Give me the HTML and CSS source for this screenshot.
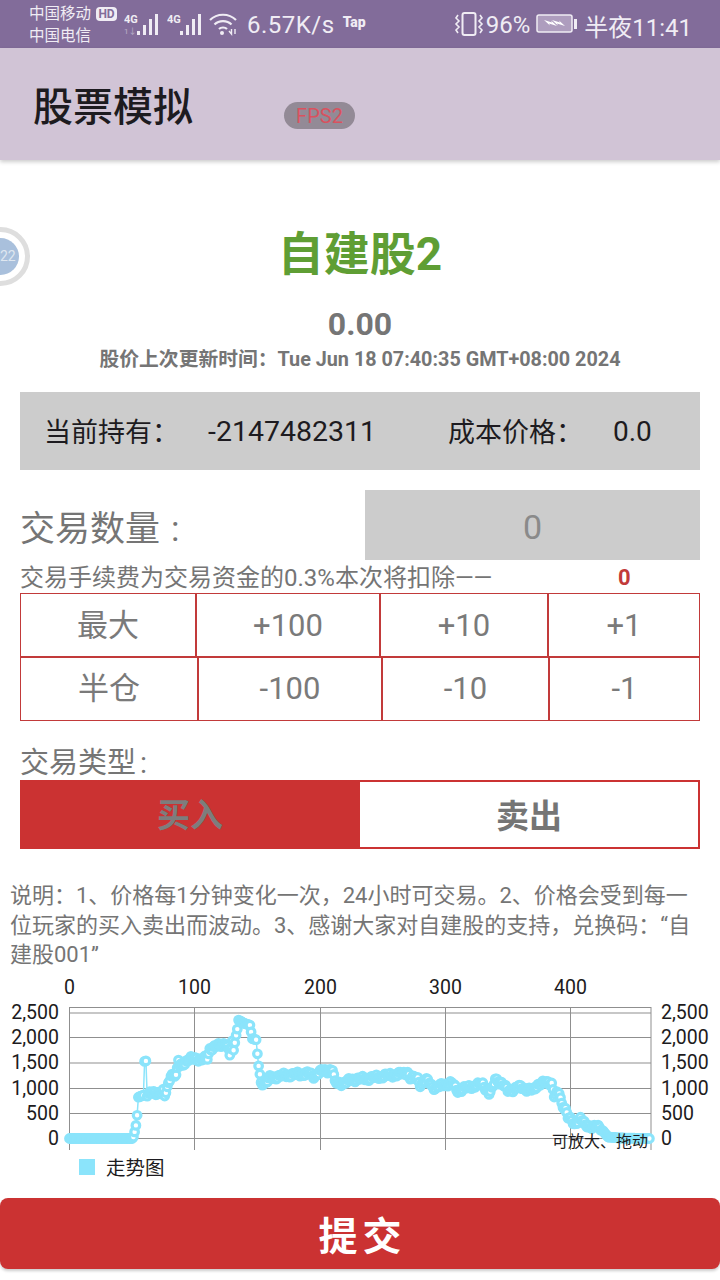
FILE: index.html
```html
<!DOCTYPE html>
<html>
  <head>
    <meta charset="utf-8">
    <title>股票模拟</title>
    <meta name="viewport" content="width=device-width, initial-scale=1">
    <link rel="stylesheet" href="styles.css">
  </head>
  <body>
    <div class="status-bar">
      <div class="carriers">
        <div class="carrier-line">中国移动<span class="hd-badge">HD</span></div>
        <div>中国电信</div>
      </div>
      <svg class="signal" width="37" height="26" viewBox="0 0 37 26">
        <text x="0" y="12" class="signal-text">4G</text>
        <text x="0" y="23" class="signal-sub">1↓</text>
        <rect x="13" y="20" width="3" height="4" />
        <rect x="19" y="14" width="3" height="10" />
        <rect x="25" y="8" width="3" height="16" />
        <rect x="31" y="3" width="3" height="21" />
      </svg>
      <svg class="signal signal-two" width="37" height="26" viewBox="0 0 37 26">
        <text x="0" y="12" class="signal-text">4G</text>
        <rect x="13" y="20" width="3" height="4" />
        <rect x="19" y="14" width="3" height="10" />
        <rect x="25" y="8" width="3" height="16" />
        <rect x="31" y="3" width="3" height="21" />
      </svg>
      <svg class="wifi" width="28" height="24" viewBox="0 0 28 24" fill="none" stroke="#f0ecf4" stroke-width="2.2">
        <path d="M1 8C8 1 20 1 27 8" />
        <path d="M5.5 12.5C10 8 18 8 22.5 12.5" />
        <path d="M10 17C12 15 16 15 18 17" />
        <circle cx="13" cy="21" r="2" fill="#f0ecf4" stroke="none" />
        <path d="M20 19l2.500 3 0-5M26 17l0 5" stroke-width="1.400" />
      </svg>
      <span class="net-speed">6.57K/s</span>
      <span class="tap-logo">Tap</span>
      <svg class="vibrate" width="30" height="26" viewBox="0 0 30 26" fill="none" stroke="#f0ecf4">
        <rect x="8.500" y="2" width="13" height="22" rx="2" stroke-width="2" />
        <path d="M4 4l-2 3 3 3-3 3 3 3-3 3 2 3M26 4l2 3-3 3 3 3-3 3 3 3-2 3" stroke-width="1.600" />
      </svg>
      <span class="battery-pct">96%</span>
      <svg class="battery" width="42" height="22" viewBox="0 0 42 22">
        <rect x="1" y="2" width="35" height="17" rx="2" fill="#ae9dbe" stroke="#f0ecf4" stroke-width="1.500" />
        <rect x="38" y="6" width="3" height="10" fill="#f0ecf4" />
        <path d="M8 7l8 2.500-1-2 6 5.500-8-2.500 1 2zM16 7l8 2.500-1-2 6 5.500-8-2.500 1 2z" fill="#fff" />
      </svg>
      <span class="clock">半夜11:41</span>
    </div>

    <div class="app-bar">
      <h1>股票模拟</h1>
    </div>
    <div class="fps-badge">FPS2</div>
    <div class="float-ball"><span>22</span></div>

    <div class="stock-name">自建股2</div>
    <div class="stock-price">0.00</div>
    <div class="stock-time">股价上次更新时间：Tue Jun 18 07:40:35 GMT+08:00 2024</div>

    <div class="holding">
      <span class="holding-label">当前持有：</span>
      <span class="holding-count">-2147482311</span>
      <span class="holding-cost">成本价格：</span>
      <span class="holding-price">0.0</span>
    </div>

    <div class="qty-row">
      <span class="qty-label">交易数量<span class="colon">:</span></span>
      <div class="qty-input">0</div>
    </div>

    <div class="fee-row">
      <span>交易手续费为交易资金的0.3%本次将扣除——</span>
      <span class="fee-value">0</span>
    </div>

    <div class="qty-grid">
      <div class="qty-line line-top">
        <div class="qty-cell">最大</div>
        <div class="qty-cell">+100</div>
        <div class="qty-cell">+10</div>
        <div class="qty-cell">+1</div>
      </div>
      <div class="qty-line line-bottom">
        <div class="qty-cell">半仓</div>
        <div class="qty-cell">-100</div>
        <div class="qty-cell">-10</div>
        <div class="qty-cell">-1</div>
      </div>
    </div>

    <div class="type-label">交易类型<span class="colon">:</span></div>
    <div class="type-toggle">
      <div class="type-btn type-active">买入</div>
      <div class="type-btn">卖出</div>
    </div>

    <p class="note">说明：1、价格每1分钟变化一次，24小时可交易。2、价格会受到每一位玩家的买入卖出而波动。3、感谢大家对自建股的支持，兑换码：“自建股001”</p>

    <div class="chart-box">
      <svg id="chart" width="720" height="180" viewBox="0 0 720 180"></svg>
      <div class="chart-hint">可放大、拖动</div>
      <div class="legend"><span class="legend-mark"></span>走势图</div>
    </div>

    <button class="submit-btn" type="button">提交</button>

    <script src="chart.js"></script>
  </body>
</html>
```

FILE: styles.css
```css
* {
  box-sizing: border-box;
}

body {
  position: relative;
  width: 720px;
  height: 1280px;
  margin: 0;
  overflow: hidden;
  background: #fff;
  color: #757575;
  font-family: Roboto, "Noto Sans CJK SC", sans-serif;
}

/* status bar */
.status-bar {
  display: flex;
  align-items: center;
  height: 48px;
  padding-left: 29px;
  background: #826c9a;
  color: #f0ecf4;
}

.carriers {
  width: 95px;
  padding-top: 2px;
  font-size: 15.500px;
  line-height: 22px;
}

.carrier-line {
  display: flex;
  align-items: center;
}

.hd-badge {
  width: 21px;
  height: 14px;
  margin-left: 5px;
  border-radius: 4px;
  background: #f0ecf4;
  color: #826c9a;
  font-size: 12px;
  font-weight: 700;
  line-height: 14px;
  text-align: center;
}

.signal {
  fill: #f0ecf4;
}

.signal-two {
  margin-left: 6px;
}

.signal-text {
  font-size: 11px;
  font-weight: 700;
}

.signal-sub {
  font-size: 8px;
  opacity: 0.5;
}

.wifi {
  margin-left: 5px;
}

.net-speed {
  margin: 2px 0 0 10px;
  font-size: 24px;
  letter-spacing: 0.5px;
}

.tap-logo {
  margin-left: 8px;
  margin-bottom: 4px;
  font-size: 14px;
  font-weight: 900;
}

.vibrate {
  margin-left: 88px;
}

.battery-pct {
  margin: 2px 0 0 2px;
  font-size: 24px;
}

.battery {
  margin-left: 6px;
}

.clock {
  margin: 2px 0 0 6px;
  font-size: 24px;
}

/* app bar */
.app-bar {
  height: 112px;
  padding: 32px 0 0 33px;
  background: #d1c4d6;
  box-shadow: 0 2px 4px rgba(0, 0, 0, 0.2);
}

.app-bar h1 {
  margin: 0;
  color: #1d1b20;
  font-size: 40px;
  font-weight: 500;
  line-height: 56px;
}

/* overlays from other apps */
.fps-badge {
  position: absolute;
  top: 102px;
  left: 284px;
  width: 71px;
  height: 27px;
  border-radius: 14px;
  background: #938a96;
  color: #d9525f;
  font-size: 20px;
  line-height: 28px;
  text-align: center;
}

.float-ball {
  position: absolute;
  top: 227px;
  left: -29px;
  width: 59px;
  height: 59px;
  padding: 6px;
  border: 5px solid #dedede;
  border-radius: 50%;
  background: #fff;
}

.float-ball span {
  display: block;
  width: 37px;
  height: 37px;
  padding-left: 18px;
  border-radius: 50%;
  background: #a9c0dc;
  color: #dfe7f0;
  font-size: 14px;
  line-height: 37px;
  white-space: nowrap;
}

/* stock header */
.stock-name {
  margin-top: 62px;
  color: #5f9e34;
  font-size: 46px;
  font-weight: 700;
  line-height: 64px;
  text-align: center;
}

.stock-price {
  margin-top: 20px;
  font-size: 32px;
  font-weight: 700;
  line-height: 36px;
  text-align: center;
}

.stock-time {
  margin-top: 4px;
  font-size: 19.800px;
  font-weight: 700;
  line-height: 28px;
  text-align: center;
}

/* holding */
.holding {
  display: flex;
  align-items: center;
  height: 78px;
  margin: 18px 20px 0;
  padding-left: 24px;
  background: #ccc;
  color: #1d1b20;
  font-size: 27px;
}

.holding-label {
  width: 164px;
  margin-top: -2px;
}

.holding-count {
  width: 240px;
  font-size: 28.500px;
}

.holding-cost {
  width: 165px;
  margin-top: -2px;
}

.holding-price {
  font-size: 28px;
}

/* quantity */
.qty-row {
  display: flex;
  align-items: center;
  justify-content: space-between;
  height: 70px;
  margin: 20px 20px 0 20px;
}

.qty-label {
  font-size: 35px;
}

.qty-label .colon {
  margin-left: 11px;
}

.qty-input {
  width: 335px;
  height: 70px;
  background: #ccc;
  color: #8a8a8a;
  font-size: 34px;
  line-height: 74px;
  text-align: center;
}

.fee-row {
  position: relative;
  height: 33px;
  margin-left: 20px;
  font-size: 24px;
  line-height: 36px;
}

.fee-value {
  position: absolute;
  left: 598px;
  color: #c23a3a;
  font-size: 22px;
  font-weight: 700;
}

.qty-grid {
  margin: 0 20px;
}

.qty-line {
  display: grid;
  height: 63px;
}

.line-top {
  grid-template-columns: 176px 184px 168px 152px;
}

.line-bottom {
  grid-template-columns: 178px 184px 167px 151px;
}

.qty-cell {
  border: 1px solid #c23a3a;
  color: #7a7a7a;
  font-size: 31px;
  line-height: 63px;
  text-align: center;
}

/* trade type */
.type-label {
  margin: 28px 0 0 20px;
  font-size: 29px;
  line-height: 32px;
}

.type-label .colon {
  margin-left: 4px;
}

.type-toggle {
  display: flex;
  height: 69px;
  margin: 1px 20px 0;
  border: 2px solid #cb3232;
  font-size: 33px;
  font-weight: 700;
}

.type-btn {
  flex: 1;
  line-height: 70px;
  text-align: center;
}

.type-active {
  flex: none;
  width: 340px;
  margin: -2px 0 -2px -2px;
  background: #cb3232;
  color: #7d7d7d;
  line-height: 72px;
}

.note {
  margin: 32px 20px 0 10px;
  font-size: 22px;
  line-height: 29.500px;
}

/* chart */
.chart-box {
  position: relative;
  height: 210px;
}

#chart {
  display: block;
}

.chart-hint {
  position: absolute;
  top: 162px;
  left: 552px;
  color: #1d1b20;
  font-size: 16px;
  line-height: 20px;
}

.legend {
  display: flex;
  align-items: center;
  height: 26px;
  margin: 4px 0 0 79px;
  color: #1d1b20;
  font-size: 19.500px;
}

.legend-mark {
  width: 16px;
  height: 16px;
  margin-right: 11px;
  background: #8be4fb;
}

.submit-btn {
  display: block;
  width: 720px;
  height: 71px;
  margin-top: 18px;
  padding: 0 0 0 5px;
  border: 0;
  border-radius: 8px;
  background: #cb3232;
  box-shadow: 0 2px 3px rgba(0, 0, 0, 0.2);
  color: #fff;
  font-family: inherit;
  font-size: 39px;
  font-weight: 700;
  letter-spacing: 5px;
}
```

FILE: chart.js
```js
const chart = document.getElementById("chart");

// [index, value] points read off the trend line, filled in between
const points = [
  [0, 0], [50, 0], [51, 30], [52, 130], [53, 260], [54, 460], [55, 820], [59, 860],
  [60, 1530], [61, 1540], [62, 880], [75, 930], [76, 830], [78, 1000], [81, 1280],
  [85, 1250], [86, 1350], [87, 1540], [88, 1450], [95, 1560], [100, 1600], [105, 1560],
  [110, 1600], [112, 1780], [120, 1850], [125, 1900], [128, 1650], [130, 1900],
  [131, 1750], [133, 2050], [134, 2170], [135, 2350], [140, 2280], [144, 2250],
  [146, 1980], [149, 1960], [150, 1680], [151, 1440], [153, 1110], [157, 1110],
  [160, 1200], [170, 1250], [180, 1270], [190, 1290], [195, 1240], [200, 1320],
  [210, 1370], [212, 1100], [220, 1100], [225, 1170], [240, 1200], [250, 1240],
  [268, 1290], [270, 1330], [272, 1200], [278, 1190], [280, 1080], [285, 1150],
  [292, 1000], [300, 1080], [305, 1100], [310, 950], [320, 1030], [330, 1080],
  [335, 900], [338, 1000], [340, 1180], [345, 1100], [350, 950], [360, 1020],
  [370, 950], [375, 1100], [385, 1100], [387, 860], [391, 900], [393, 680],
  [396, 600], [398, 430], [403, 280], [408, 410], [412, 250], [420, 240],
  [425, 180], [430, 30], [440, 10], [463, 0],
];

const xPos = (i) => 69.5 + i * 1.2525;
const yPos = (v) => 168.5 - v * 0.0504;

let svg = "";

function line(x1, y1, x2, y2, color) {
  svg += `<line x1="${x1}" y1="${y1}" x2="${x2}" y2="${y2}" stroke="${color}" />`;
}

function label(x, y, text, anchor) {
  svg += `<text x="${x}" y="${y}" text-anchor="${anchor}" font-size="19.5" fill="#1d1b20">${text}</text>`;
}

// horizontal grid, y values as in the picture (some rows are straddled on purpose)
[[2500, 43], [2000, 67.5], [1500, 93], [1000, 118.5], [500, 143.5], [0, 168.5]].forEach((row) => {
  line(69, row[1], 651, row[1], "#8f8f8f");
  const text = row[0].toLocaleString("en-US");
  label(59, row[1] + 6, text, "end");
  label(661, row[1] + 6, text, "start");
});
line(69, 37.5, 651, 37.5, "#8f8f8f");

[0, 100, 200, 300, 400].forEach((tick) => {
  const x = Math.round(xPos(tick) - 0.5) + 0.5;
  line(x, 37, x, 180, "#8f8f8f");
  label(x, 24, tick, "middle");
});
line(651, 37, 651, 180, "#8f8f8f");

// wobble so the flat stretches get the same lumpy band
function wobble(i) {
  if (i < 62 || i > 425 || (i > 130 && i < 153)) return 0;
  return 30 * Math.sin(i * 1.7) + 25 * Math.sin(i * 0.6);
}

// fill in every index between the read points
let trail = [];
for (let p = 0; p < points.length - 1; p++) {
  const [i1, v1] = points[p];
  const [i2, v2] = points[p + 1];
  for (let i = i1; i < i2; i++) {
    const value = v1 + ((v2 - v1) * (i - i1)) / (i2 - i1);
    trail.push([xPos(i), yPos(value + wobble(i))]);
  }
}
trail.push([xPos(463), yPos(0)]);

svg += `<polyline fill="none" stroke="#8be4fb" stroke-width="1.5" points="${trail
  .map((t) => t[0].toFixed(1) + "," + t[1].toFixed(1))
  .join(" ")}" />`;
trail.forEach((t) => {
  svg += `<circle cx="${t[0].toFixed(1)}" cy="${t[1].toFixed(1)}" r="3.8" fill="#fff" stroke="#8be4fb" stroke-width="3.2" />`;
});

chart.innerHTML = svg;
```
